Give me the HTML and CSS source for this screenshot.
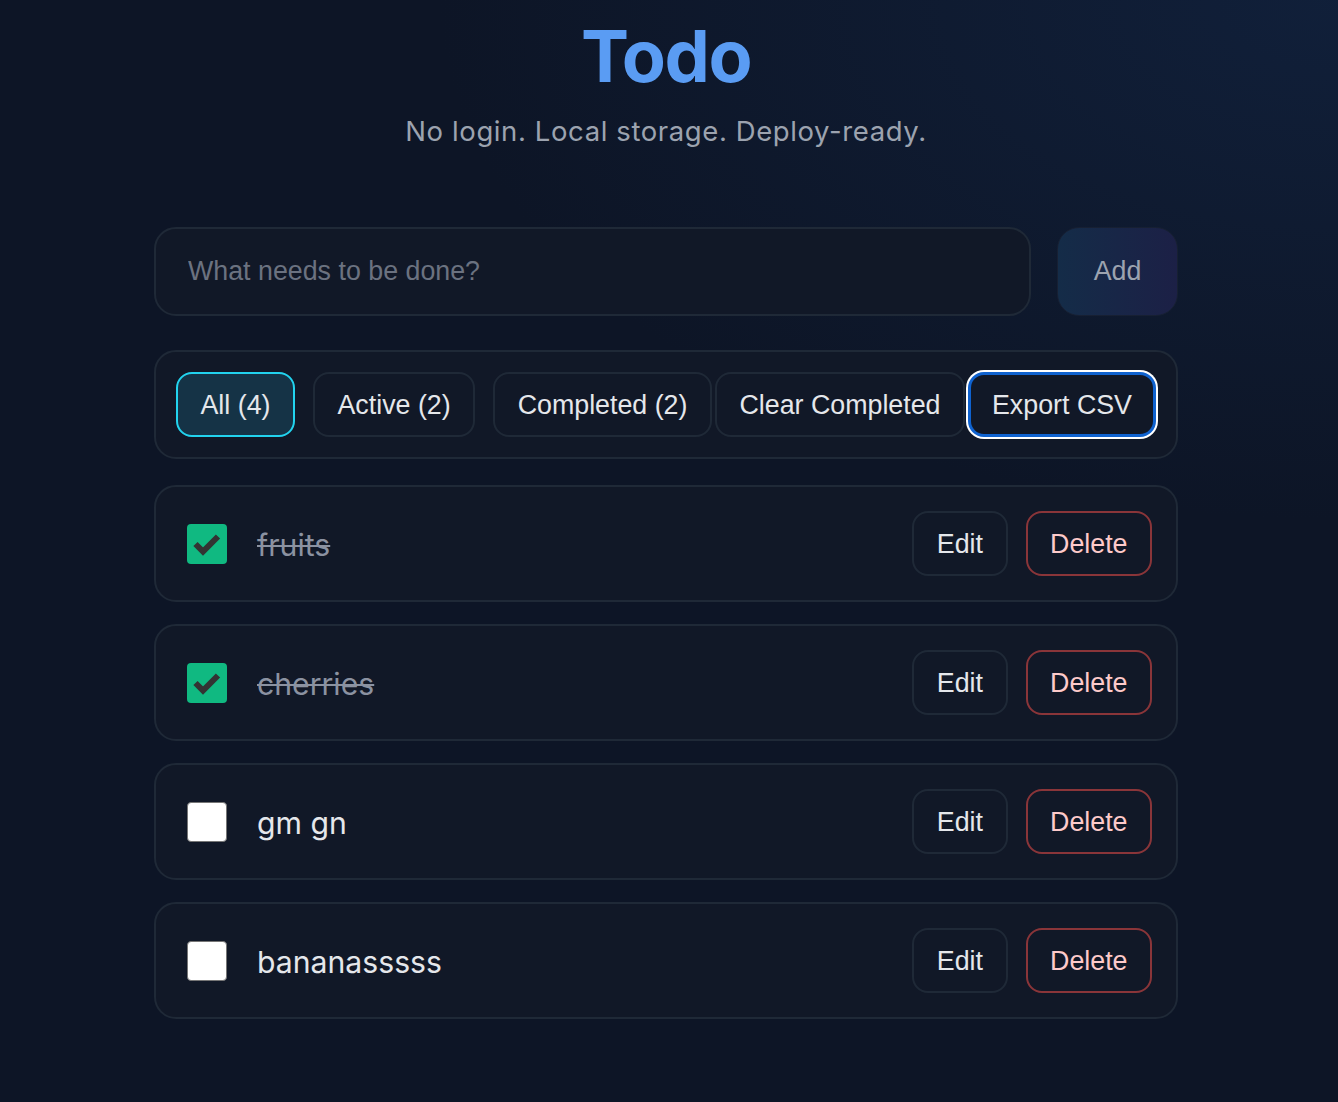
FILE: index.html
```html
<!DOCTYPE html>
<html lang="en">
<head>
<meta charset="utf-8">
<title>Todo</title>
<link rel="stylesheet" href="styles.css">
</head>
<body>
<main class="app">
  <header class="header">
    <h1 class="title">Todo</h1>
    <p class="subtitle">No login. Local storage. Deploy-ready.</p>
  </header>

  <form class="add-form">
    <input class="add-input" type="text" placeholder="What needs to be done?">
    <button class="add-btn" type="button">Add</button>
  </form>

  <div class="toolbar">
    <div class="group">
      <button class="btn btn-filter is-active" type="button">All (4)</button>
      <button class="btn btn-filter" type="button">Active (2)</button>
      <button class="btn btn-filter" type="button">Completed (2)</button>
    </div>
    <div class="group group-actions">
      <button class="btn" type="button">Clear Completed</button>
      <button class="btn is-focused" type="button">Export CSV</button>
    </div>
  </div>

  <ul class="todo-list">
    <li class="todo">
      <span class="check is-checked"><svg viewBox="0 0 40 40" width="40" height="40"><path d="M8.5 20 L16 27.5 L31 12.5" fill="none" stroke="#333" stroke-width="6"/></svg></span>
      <span class="todo-text is-done">fruits</span>
      <div class="todo-actions">
        <button class="btn" type="button">Edit</button>
        <button class="btn btn-danger" type="button">Delete</button>
      </div>
    </li>
    <li class="todo">
      <span class="check is-checked"><svg viewBox="0 0 40 40" width="40" height="40"><path d="M8.5 20 L16 27.5 L31 12.5" fill="none" stroke="#333" stroke-width="6"/></svg></span>
      <span class="todo-text is-done">cherries</span>
      <div class="todo-actions">
        <button class="btn" type="button">Edit</button>
        <button class="btn btn-danger" type="button">Delete</button>
      </div>
    </li>
    <li class="todo">
      <span class="check"></span>
      <span class="todo-text">gm gn</span>
      <div class="todo-actions">
        <button class="btn" type="button">Edit</button>
        <button class="btn btn-danger" type="button">Delete</button>
      </div>
    </li>
    <li class="todo">
      <span class="check"></span>
      <span class="todo-text">bananasssss</span>
      <div class="todo-actions">
        <button class="btn" type="button">Edit</button>
        <button class="btn btn-danger" type="button">Delete</button>
      </div>
    </li>
  </ul>
</main>
</body>
</html>
```

FILE: styles.css
```css
* { box-sizing: border-box; }

html, body {
  margin: 0;
  padding: 0;
}

body {
  min-height: 100vh;
  padding-right: 6px;
  background:
    radial-gradient(ellipse 900px 520px at 100% 0%, rgba(18, 36, 66, 0.7), rgba(18, 36, 66, 0) 100%),
    #0d1526;
  font-family: Inter, "Noto Sans", sans-serif;
  color: #e5e7eb;
}

.app {
  width: 1024px;
  margin: 0 auto;
  padding-top: 13px;
}

.header {
  text-align: center;
}

.title {
  margin: 0;
  font-size: 72px;
  line-height: 86px;
  font-weight: 700;
  letter-spacing: -1.5px;
  color: #5a9cf3;
}

.subtitle {
  margin: 13px 0 0;
  font-size: 27.5px;
  line-height: 38px;
  letter-spacing: 0.6px;
  color: #9ca3af;
}

.add-form {
  display: flex;
  gap: 26px;
  margin-top: 77px;
}

.add-input {
  flex: 1;
  height: 89px;
  padding: 0 32px;
  border: 2px solid #1f2937;
  border-radius: 22px;
  background: #111827;
  font-family: "Liberation Sans", Arial, sans-serif;
  font-size: 26.8px;
  color: #e5e7eb;
  outline: none;
}

.add-input::placeholder {
  color: #6b7280;
}

.add-btn {
  width: 121px;
  height: 89px;
  border: 1.6px solid #172033;
  border-radius: 22px;
  background: linear-gradient(90deg, #142c48, #1c2046);
  font-family: "Liberation Sans", Arial, sans-serif;
  font-size: 26.8px;
  color: #9ca3af;
}

.toolbar {
  display: flex;
  justify-content: space-between;
  align-items: center;
  margin-top: 34px;
  height: 109px;
  padding: 0 20px;
  border: 2px solid #1f2937;
  border-radius: 22px;
  background: #111827;
}

.group {
  display: flex;
  gap: 18px;
}

.group-actions {
  gap: 3px;
}

.btn {
  flex: none;
  height: 65px;
  padding: 0 22.5px;
  border: 2px solid #1f2937;
  border-radius: 16px;
  background: #111827;
  font-family: "Liberation Sans", Arial, sans-serif;
  font-size: 26.8px;
  line-height: 30px;
  color: #e5e7eb;
  white-space: nowrap;
}

.btn-filter.is-active {
  border: 2px solid #22d3ee;
  background: #153346;
  color: #e5e7eb;
}

.btn.is-focused {
  border: 3.5px solid #0f62cf;
  box-shadow: 0 0 0 2px #ffffff;
  padding: 0 21px;
  background: #111827;
}

.btn-danger {
  border-color: #8a3539;
  color: #fecaca;
}

.todo-list {
  list-style: none;
  margin: 26px 0 0;
  padding: 0;
  display: flex;
  flex-direction: column;
  gap: 22px;
}

.todo {
  display: flex;
  align-items: center;
  height: 117px;
  padding: 0 24px;
  border: 2px solid #1f2937;
  border-radius: 22px;
  background: #111827;
}

.check {
  flex: none;
  width: 40px;
  height: 40px;
  margin-left: 7px;
  margin-right: 30px;
  border: 1.6px solid #767676;
  border-radius: 4px;
  background: #ffffff;
  display: flex;
}

.check.is-checked {
  border: none;
  background: #10b981;
}

.check svg {
  display: block;
}

.todo-text {
  flex: 1;
  font-size: 30.2px;
  line-height: 40px;
  padding-top: 3px;
  color: #e5e7eb;
}

.todo-text.is-done {
  color: #8b92a1;
  text-decoration: line-through;
  text-decoration-thickness: 2px;
}

.todo-actions {
  display: flex;
  gap: 18px;
}
```
